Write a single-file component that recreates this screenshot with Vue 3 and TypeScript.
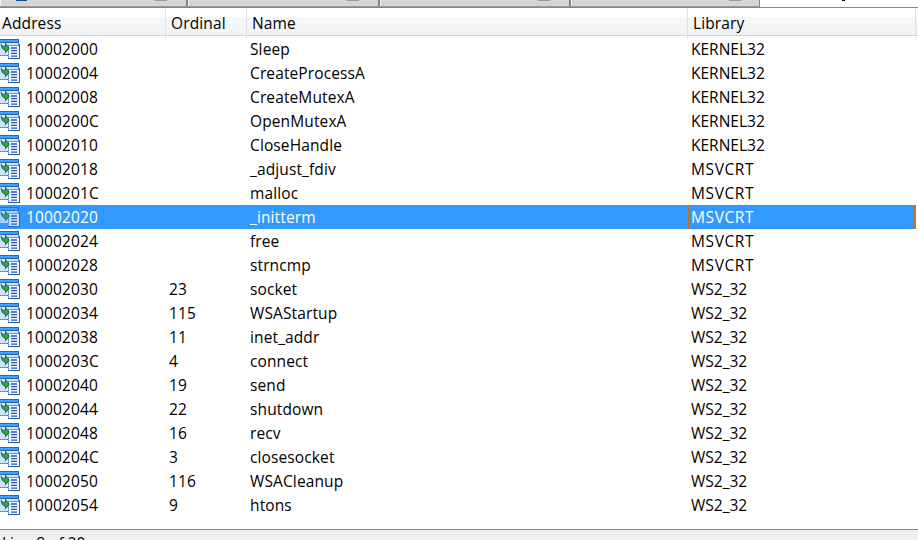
<script setup lang="ts">
interface ImportRow {
  address: string
  ordinal: string
  name: string
  library: string
}

const rows: ImportRow[] = [
  ['10002000', '', 'Sleep', 'KERNEL32'],
  ['10002004', '', 'CreateProcessA', 'KERNEL32'],
  ['10002008', '', 'CreateMutexA', 'KERNEL32'],
  ['1000200C', '', 'OpenMutexA', 'KERNEL32'],
  ['10002010', '', 'CloseHandle', 'KERNEL32'],
  ['10002018', '', '_adjust_fdiv', 'MSVCRT'],
  ['1000201C', '', 'malloc', 'MSVCRT'],
  ['10002020', '', '_initterm', 'MSVCRT'],
  ['10002024', '', 'free', 'MSVCRT'],
  ['10002028', '', 'strncmp', 'MSVCRT'],
  ['10002030', '23', 'socket', 'WS2_32'],
  ['10002034', '115', 'WSAStartup', 'WS2_32'],
  ['10002038', '11', 'inet_addr', 'WS2_32'],
  ['1000203C', '4', 'connect', 'WS2_32'],
  ['10002040', '19', 'send', 'WS2_32'],
  ['10002044', '22', 'shutdown', 'WS2_32'],
  ['10002048', '16', 'recv', 'WS2_32'],
  ['1000204C', '3', 'closesocket', 'WS2_32'],
  ['10002050', '116', 'WSACleanup', 'WS2_32'],
  ['10002054', '9', 'htons', 'WS2_32'],
].map(([address, ordinal, name, library]) => ({ address, ordinal, name, library }))

const selected = '10002020'
</script>

<template>
  <div class="window">
    <div class="tabs">
      <div class="tab first"><i class="app-mark"></i><i class="close"></i></div>
      <div class="tab second"><i class="close"></i></div>
      <div class="tab third"><i class="close"></i></div>
      <div class="tab fourth"><i class="close"></i></div>
      <div class="active-tab"><i class="descender"></i></div>
    </div>
    <div class="grid header">
      <div class="head address">Address</div>
      <div class="head">Ordinal</div>
      <div class="head">Name</div>
      <div class="head">Library</div>
      <div class="tail"></div>
    </div>
    <div class="list">
      <div v-for="row in rows" :key="row.address" class="grid row" :class="{ selected: row.address === selected }">
        <div class="cell entry">
          <svg class="icon" width="20" height="20" viewBox="0 0 20 20">
            <rect x="0" y="0" width="19" height="17" fill="#5c91d6" />
            <rect x="0" y="0" width="19" height="4" fill="#1e66c6" />
            <rect x="0" y="1" width="18" height="2" fill="#45a5f2" />
            <rect x="0" y="4" width="18" height="12" fill="#cfe3fb" />
            <rect x="8.5" y="6.5" width="11" height="13" fill="#f4f8ff" stroke="#6f9dd1" />
            <path d="M19.5 5v14.5H8" fill="none" stroke="#245c9c" />
            <path d="M11 9h6M11 11.7h6M11 14.4h6M11 17.1h6" stroke="#2850c0" stroke-width="1.3" />
            <path d="M1 5.5l2.5 2.2L5.5 7V4.5L9.5 9.5 5.5 13.5v-2.3Q2 11 1 5.5z" fill="#35a544" stroke="#12602c" stroke-width=".9" />
          </svg>
          <span>{{ row.address }}</span>
        </div>
        <div class="cell">{{ row.ordinal }}</div>
        <div class="cell">{{ row.name }}</div>
        <div class="cell library" :class="{ runtime: row.library === 'MSVCRT' }">
          {{ row.library }}
          <svg v-if="row.address === selected" class="focus" width="228" height="24" shape-rendering="crispEdges">
            <path
              d="M1 .5H227M1 23.5H227M.5 1V24M226.5 1V24"
              fill="none"
              stroke="#cc6600"
              stroke-dasharray="1 1"
            />
          </svg>
        </div>
      </div>
    </div>
    <div class="status"><span>Line 8 of 20</span></div>
  </div>
</template>

<style>
body {
  overflow: hidden;
}
</style>

<style scoped>
.window {
  box-sizing: border-box;
  display: flex;
  flex-direction: column;
  width: 918px;
  height: 540px;
  overflow: hidden;
  background: #fff;
  color: #000;
  font-family: "Open Sans", "Noto Sans", sans-serif;
  font-size: 15.5px;
  letter-spacing: .12px;
}
.tabs {
  box-sizing: border-box;
  display: flex;
  flex: none;
  height: 8px;
  border-bottom: 1px solid #85858c;
}
.tab {
  box-sizing: border-box;
  display: flex;
  height: 7px;
  justify-content: flex-end;
  padding-right: 19px;
  border-right: 2px solid #85858c;
  border-bottom: 1px solid #9a9a9e;
  background: #d5d5d5;
  box-shadow: inset 1px 0 #f4f4f4;
}
.first { width: 188px; }
.second { width: 192px; }
.third { width: 191px; }
.fourth { width: 189px; border-right-width: 1px; padding-right: 18px; }
.close {
  width: 12px;
  height: 1px;
  background: #999;
}
.app-mark {
  width: 11px;
  height: 1px;
  margin-left: 16px;
  margin-right: auto;
  background: #164f8d;
}
.active-tab {
  flex: 1;
  padding-left: 82px;
}
.descender {
  display: block;
  width: 3px;
  height: 1px;
  background: #000;
}
.grid {
  display: grid;
  grid-template-columns: 166px 81px 441px 228px 2px;
}
.header {
  box-sizing: border-box;
  flex: none;
  height: 28px;
  border-bottom: 1px solid #d5d5d5;
  background: linear-gradient(#fff 0 9px, #f7f8fa 9px, #f1f2f4 27px);
}
.head {
  padding-left: 5px;
  border-right: 1px solid #e0e1e3;
  line-height: 31px;
  white-space: nowrap;
}
.address { padding-left: 2px; }
.list {
  flex: none;
  height: 492px;
  padding-top: 1px;
}
.row {
  height: 24px;
  width: 918px;
}
.cell {
  padding-left: 3px;
  line-height: 24px;
  white-space: nowrap;
}
.entry {
  display: flex;
  padding-left: 0;
}
.library {
  position: relative;
  letter-spacing: 0;
}
.library.runtime { letter-spacing: .6px; }
.icon {
  flex: none;
  margin: 2px 6px 0 0;
}
.selected {
  width: 916px;
  grid-template-columns: 166px 81px 441px 228px;
  background: #3399ff;
  color: #fff;
}
.selected .icon { opacity: .75; }
.focus {
  position: absolute;
  top: 0;
  left: 0;
}
.status {
  flex: 1;
  padding-left: 2px;
  border-top: 1px solid #85858c;
  background: #f0f0f0;
  letter-spacing: 0;
  line-height: 27px;
}
</style>
